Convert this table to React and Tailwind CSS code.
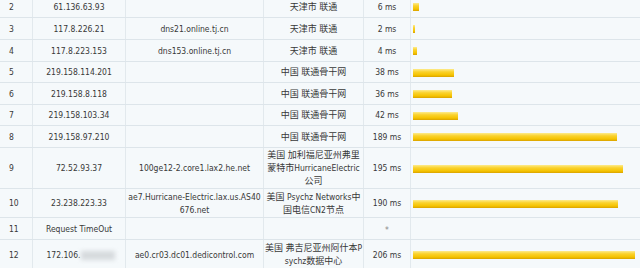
const hops = [
  { n: 2, ip: ["61.136.63.93"], host: [], loc: ["天津市 联通"], ms: 6, h: "h-[22px]" },
  { n: 3, ip: ["117.8.226.21"], host: ["dns21.online.tj.cn"], loc: ["天津市 联通"], ms: 2, h: "h-[22px]" },
  { n: 4, ip: ["117.8.223.153"], host: ["dns153.online.tj.cn"], loc: ["天津市 联通"], ms: 4, h: "h-[22px]" },
  { n: 5, ip: ["219.158.114.201"], host: [], loc: ["中国 联通骨干网"], ms: 38, h: "h-[21px]" },
  { n: 6, ip: ["219.158.8.118"], host: [], loc: ["中国 联通骨干网"], ms: 36, h: "h-[22px]" },
  { n: 7, ip: ["219.158.103.34"], host: [], loc: ["中国 联通骨干网"], ms: 42, h: "h-[21px]" },
  { n: 8, ip: ["219.158.97.210"], host: [], loc: ["中国 联通骨干网"], ms: 189, h: "h-[22px]" },
  {
    n: 9,
    ip: ["72.52.93.37"],
    host: ["100ge12-2.core1.lax2.he.net"],
    loc: ["美国 加利福尼亚州弗里", "蒙特市HurricaneElectric", "公司"],
    ms: 195,
    h: "h-[41px]",
  },
  {
    n: 10,
    ip: ["23.238.223.33"],
    host: ["ae7.Hurricane-Electric.lax.us.AS40", "676.net"],
    loc: ["美国 Psychz Networks中", "国电信CN2节点"],
    ms: 190,
    h: "h-[29px]",
  },
  { n: 11, ip: ["Request TimeOut"], host: [], loc: [], ms: null, h: "h-[22px]" },
  {
    n: 12,
    ip: null,
    host: ["ae0.cr03.dc01.dedicontrol.com"],
    loc: ["美国 弗吉尼亚州阿什本P", "sychz数据中心"],
    ms: 206,
    h: "h-[30px]",
  },
];

// chinese runs sit a touch larger than the latin text
function Mixed({ text }) {
  return text.split(/([\u4e00-\u9fff]+)/).map((part, i) =>
    /[\u4e00-\u9fff]/.test(part) ? (
      <span key={i} className="text-[9px]">
        {part}
      </span>
    ) : (
      part
    )
  );
}

function Lines({ lines }) {
  return (
    <div className="flex flex-col items-center leading-[13px]">
      {lines.map((l, i) => (
        <span key={i} className="whitespace-nowrap">
          <Mixed text={l} />
        </span>
      ))}
    </div>
  );
}

function Bar({ ms }) {
  if (ms == null) return null;
  const w = Math.max(2, Math.round(ms * 1.078));
  return (
    <div
      className="h-[8px] bg-[linear-gradient(to_bottom,#fdeb8c,#fad22e_35%,#f5c300_75%,#d9a200)]"
      style={{ width: w }}
    />
  );
}

export default function App() {
  return (
    <div
      className="w-[640px] h-[268px] overflow-hidden bg-[#f5f9fb] text-[8.5px] text-[#383838]"
      style={{ fontFamily: '"DejaVu Sans Condensed", "Liberation Sans", "Noto Sans CJK SC", sans-serif' }}
    >
      <div className="-mt-[4px]">
        {hops.map((r) => (
          <div key={r.n} className={`flex border-b border-[#dde5ea] ${r.h}`}>
            <div className="w-[33px] border-r border-[#e2e9ed] flex items-center pl-[9px] pt-[1px]">
              {r.n}
            </div>
            <div className="w-[93px] border-r border-[#e2e9ed] flex items-center justify-center pt-[1px]">
              {r.ip ? (
                <Lines lines={r.ip} />
              ) : (
                <span className="flex items-center pl-[3px]">
                  172.106.
                  <span className="inline-block w-[34px] h-[9px] bg-[#d6dadd] blur-[2px]" />
                </span>
              )}
            </div>
            <div className="w-[138px] border-r border-[#e2e9ed] flex items-center justify-center pt-[1px]">
              <Lines lines={r.host} />
            </div>
            <div className="w-[100px] border-r border-[#e2e9ed] flex items-center justify-center pt-[1px]">
              <Lines lines={r.loc} />
            </div>
            <div className="w-[47px] border-r border-[#e2e9ed] flex items-center justify-center pt-[1px]">
              {r.ms == null ? <span className="text-[#888] self-start pt-[5px]">*</span> : `${r.ms} ms`}
            </div>
            <div className="flex-1 flex items-center pl-[2px] pt-[1px]">
              <Bar ms={r.ms} />
            </div>
          </div>
        ))}
      </div>
    </div>
  );
}
